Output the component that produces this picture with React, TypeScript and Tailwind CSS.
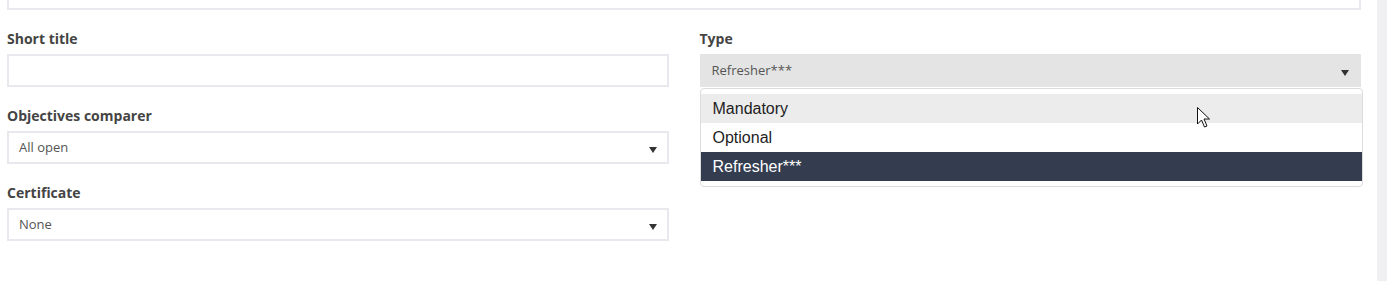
import { ReactNode } from 'react'

const labelCls = "block h-[20px] pt-[2px] leading-[18px] mb-[6px] text-[14px] font-bold text-[#444]"

const Caret = () => (
    <svg width="8" height="6" viewBox="0 0 8 6" className="absolute right-[10px] top-[14px]">
        <path d="M0 0 H8 L4 6 Z" fill="#333" />
    </svg>
)

const Field = ({ label, children }: { label: string; children: ReactNode }) => (
    <div className="mb-[18px]">
        <label className={labelCls}>{label}</label>
        {children}
    </div>
)

const SelectBox = ({ value, muted }: { value: string; muted?: boolean }) => (
    <div
        className={
            muted
                ? "relative h-[33px] border-2 border-[#e4e4e4] bg-[#e4e4e4] pl-[10px] leading-[29px] text-[13px] text-[#555]"
                : "relative h-[33px] border-2 border-[#e8e8ee] bg-white pl-[10px] leading-[29px] text-[13px] text-[#555]"
        }
    >
        {value}
        <Caret />
    </div>
)

const OPTIONS = ['Mandatory', 'Optional', 'Refresher***']

const App = () => {
    return (
        <div className="flex h-[281px] w-[1387px] overflow-hidden bg-white" style={{ fontFamily: '"Open Sans", sans-serif' }}>
            <div className="flex-1 pl-[7px] pr-[16px]">
                {/* bottom of previous input */}
                <div className="h-[10px] border-2 border-t-0 border-[#e8e8ee]" />

                <div className="mt-[18px] grid grid-cols-2 gap-[31px]">
                    <div>
                        <Field label="Short title">
                            <div className="h-[33px] border-2 border-[#e8e8ee] bg-white" />
                        </Field>
                        <Field label="Objectives comparer">
                            <SelectBox value="All open" />
                        </Field>
                        <Field label="Certificate">
                            <SelectBox value="None" />
                        </Field>
                    </div>

                    <div className="relative">
                        <Field label="Type">
                            <SelectBox value="Refresher***" muted />
                        </Field>

                        {/* open dropdown */}
                        <div
                            className="absolute left-0 right-[-2px] top-[60px] rounded-[4px] border border-[#dcdcdc] bg-white py-[5px] text-[16px] text-[#1e1e1e]"
                            style={{ fontFamily: '"Liberation Sans", Arial, sans-serif' }}
                        >
                            {OPTIONS.map((o, i) => (
                                <div
                                    key={o}
                                    className={
                                        i === 0
                                            ? "h-[29px] bg-[#ececec] pl-[12px] leading-[29px]"
                                            : i === 2
                                                ? "h-[29px] bg-[#333d4f] pl-[12px] leading-[29px] text-white"
                                                : "h-[29px] pl-[12px] leading-[29px]"
                                    }
                                >
                                    {o}
                                </div>
                            ))}
                        </div>

                        {/* mouse cursor */}
                        <svg width="14" height="22" viewBox="0 0 14 22" className="absolute left-[497px] top-[79px]">
                            <path
                                d="M0.5 0.5 V17 L4.5 13 L7.5 20 L10 19 L7 12 L12.5 12 Z"
                                fill="white"
                                stroke="#111"
                                strokeWidth="1"
                                strokeLinejoin="round"
                            />
                        </svg>
                    </div>
                </div>
            </div>
            <div className="h-[281px] w-[10px] bg-[#f0f0f3]" />
        </div>
    )
}

export default App
